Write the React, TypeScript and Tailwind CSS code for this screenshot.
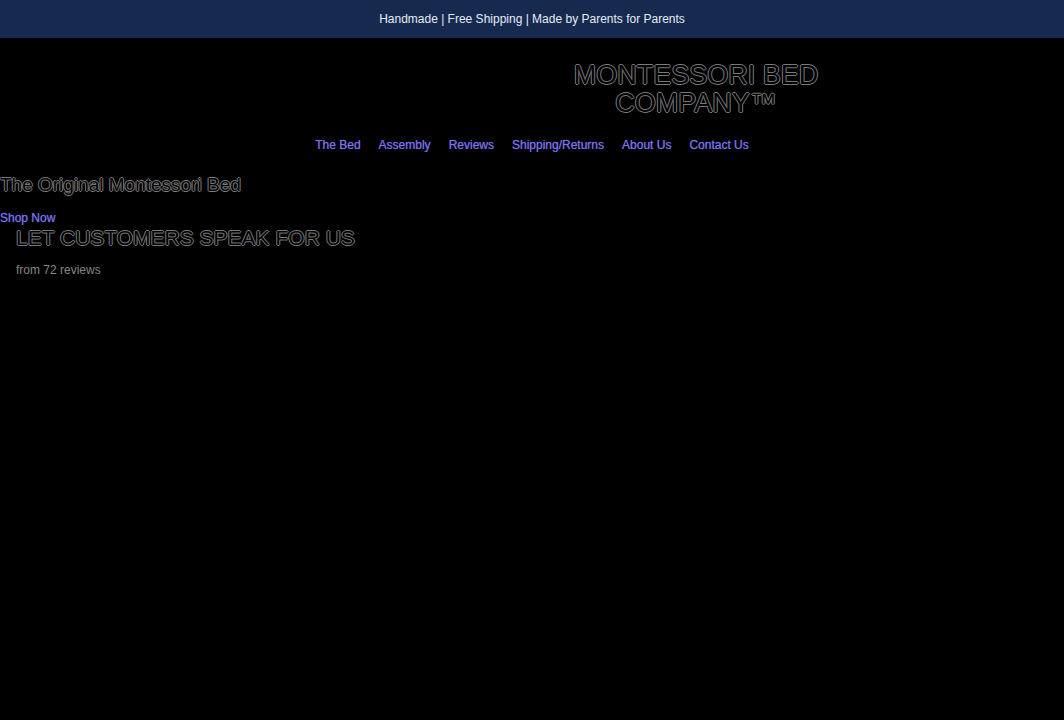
const links = ["The Bed", "Assembly", "Reviews", "Shipping/Returns", "About Us", "Contact Us"];

const outline =
  "text-black [text-shadow:1px_0_#7a7a7a,-1px_0_#7a7a7a,0_1px_#7a7a7a,0_-1px_#7a7a7a]";
const linkStyle = "text-xs leading-5 text-[#7c78e0] [text-shadow:0_0_1px_#4a44d8]";

export default function App() {
  return (
    <div className="min-h-screen bg-black font-['Liberation_Sans',sans-serif] antialiased">
      <div className="bg-[#162a50] py-2 text-center text-xs leading-[22px] text-[#e4eaf5]">
        Handmade | Free Shipping | Made by Parents for Parents
      </div>
      <header className="pt-[23px]">
        <div className="flex justify-center pl-[328px]">
          <h1 className={`w-72 text-center text-[27px] leading-7 uppercase ${outline}`}>
            Montessori Bed Company™
          </h1>
        </div>
        <nav aria-label="Main" className="mt-[18px] flex flex-wrap justify-center gap-x-[18px]">
          {links.map((label) => (
            <a key={label} href="#" className={linkStyle}>
              {label}
            </a>
          ))}
        </nav>
      </header>
      <main>
        <section className="pt-[18px]">
          <h2 className={`text-[19px] leading-6 ${outline}`}>The Original Montessori Bed</h2>
          <a href="#" className={`mt-[11px] block w-fit ${linkStyle}`}>
            Shop Now
          </a>
        </section>
        <section className="px-4">
          <h2 className={`text-[21px] leading-5 uppercase ${outline}`}>
            Let customers speak for us
          </h2>
          <p className="mt-3 text-xs leading-5 text-[#858585]">from 72 reviews</p>
        </section>
      </main>
    </div>
  );
}
